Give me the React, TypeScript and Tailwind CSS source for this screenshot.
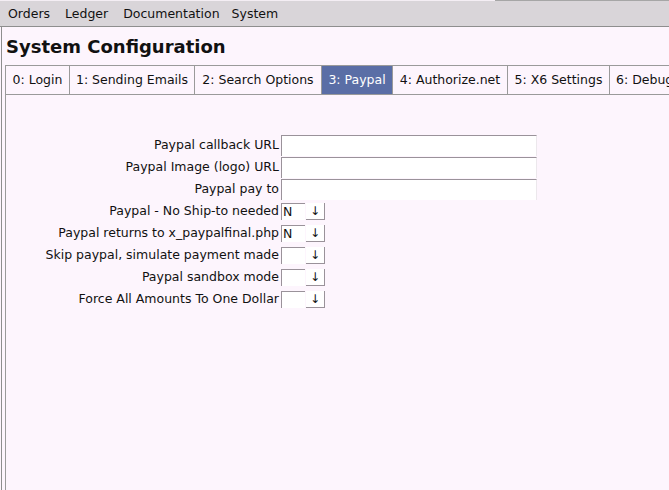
const font = { fontFamily: '"DejaVu Sans", Verdana, sans-serif' };

const menus = ['Orders', 'Ledger', 'Documentation', 'System'];
const tabs: [string, string][] = [
  ['0: Login', 'w-[64px]'],
  ['1: Sending Emails', 'w-[125px]'],
  ['2: Search Options', 'w-[127px]'],
  ['3: Paypal', 'w-[71px]'],
  ['4: Authorize.net', 'w-[115px]'],
  ['5: X6 Settings', 'w-[102px]'],
  ['6: Debug', 'w-[80px] justify-start pl-[6px]'],
];

const textFields = ['Paypal callback URL', 'Paypal Image (logo) URL', 'Paypal pay to'];
const selectFields: [string, string][] = [
  ['Paypal - No Ship-to needed', 'N'],
  ['Paypal returns to x_paypalfinal.php', 'N'],
  ['Skip paypal, simulate payment made', ''],
  ['Paypal sandbox mode', ''],
  ['Force All Amounts To One Dollar', ''],
];

function Label({ children }: { children: string }) {
  return <div className="w-[275px] shrink-0 text-right pr-[2px] whitespace-nowrap leading-[22px]">{children}</div>;
}

export default function App() {
  return (
    <div className="w-[669px] h-[490px] overflow-hidden bg-[#fdf5fd] text-[12.5px] text-[#111] flex flex-col" style={font}>
      {/* menu bar */}
      <div className="flex h-px shrink-0">
        <div className="w-[495px] bg-[#f4eef4]" />
        <div className="flex-1 bg-[#a6a6a6]" />
      </div>
      <div className="h-[26px] shrink-0 bg-[#d9d5d9] border-b border-[#8e8e8e] flex items-center pl-[8px] pt-[2px]">
        <span className="mr-[15px]">{menus[0]}</span>
        <span className="mr-[15px]">{menus[1]}</span>
        <span className="mr-[12px]">{menus[2]}</span>
        <span>{menus[3]}</span>
      </div>

      <div className="flex-1 flex flex-col ml-px border-l border-[#8e8e8e]">
        <h1 className="font-bold text-[18px] leading-none pl-[4px] pt-[11px] pb-[9px]">System Configuration</h1>

        <div className="flex-1 flex flex-col ml-[3px] border-l border-[#9a9a9a]">
          <div className="flex h-[30px] shrink-0 border-t border-b border-[#9a9a9a] overflow-hidden">
            {tabs.map(([t, w]) => (
              <div
                key={t}
                className={
                  'flex items-center justify-center whitespace-nowrap shrink-0 border-r border-[#9a9a9a] ' +
                  w +
                  (t === '3: Paypal' ? ' bg-[#5a6ea6] text-white' : '')
                }
              >
                {t}
              </div>
            ))}
          </div>

          <div className="pt-[39px] flex flex-col">
            {textFields.map((f) => (
              <div key={f} className="flex h-[22px] items-center">
                <Label>{f}</Label>
                <div className="w-[256px] h-[21px] bg-white border-t border-l border-[#9a929a] border-r border-r-[#ece8ec]" />
              </div>
            ))}
            {selectFields.map(([f, v]) => (
              <div key={f} className="flex h-[22px] items-center">
                <Label>{f}</Label>
                <div className="w-[24px] h-[17px] bg-white border-t border-l border-[#9a929a] leading-[16px] pl-[1px]">{v}</div>
                <div className="w-[19px] h-[17px] ml-px bg-white border-r border-b border-[#9a929a] flex items-center justify-center text-[12px] leading-none">↓</div>
              </div>
            ))}
          </div>
        </div>
      </div>
    </div>
  );
}
